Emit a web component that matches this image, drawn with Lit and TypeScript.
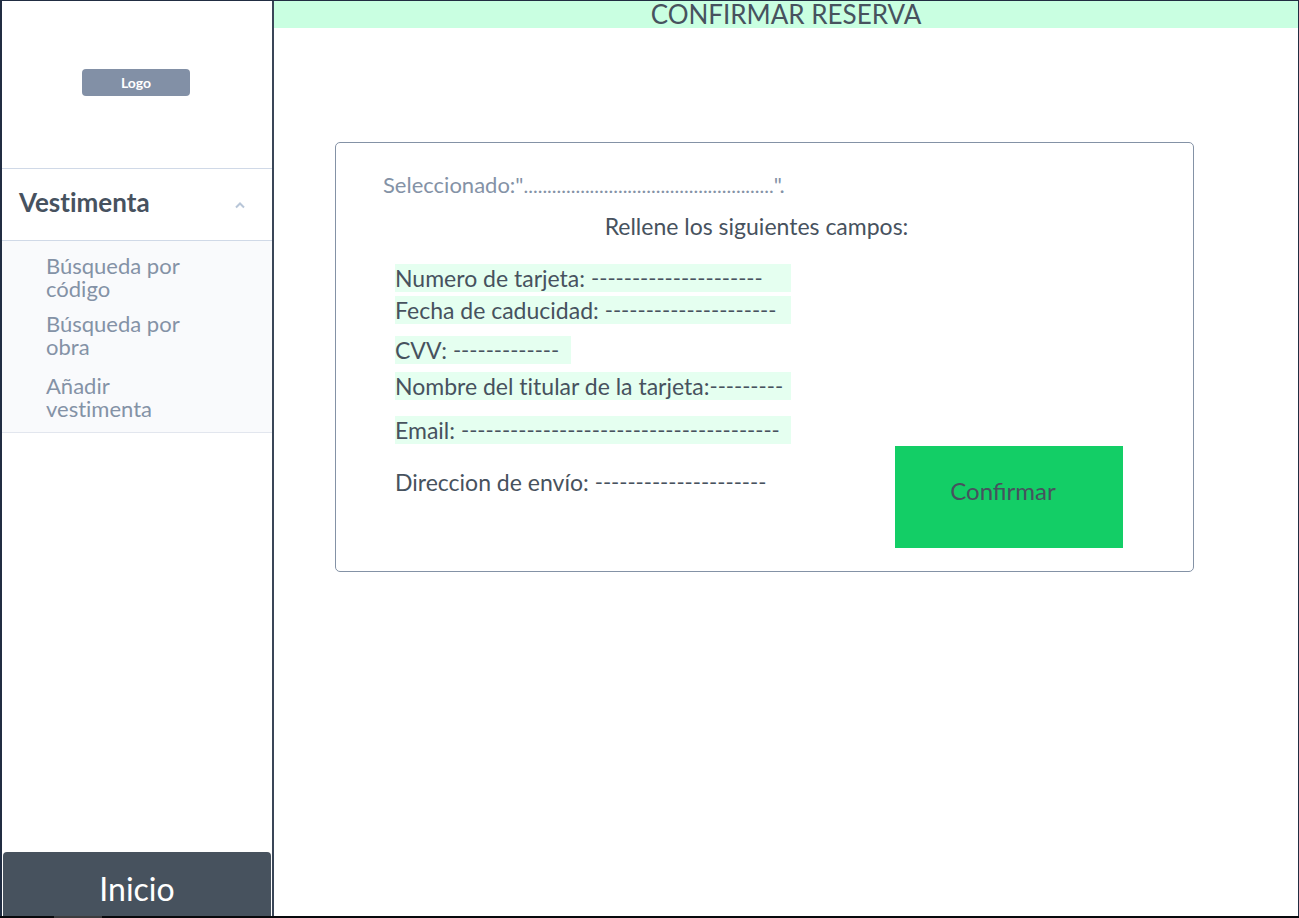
import { LitElement, html, css } from "lit";
import { customElement, state } from "lit/decorators.js";
import { classMap } from "lit/directives/class-map.js";

interface Field {
  id: string;
  label: string;
  dashes: number;
  classes: Record<string, boolean>;
}

const FIELDS: Field[] = [
  { id: "numero", label: "Numero de tarjeta:", dashes: 21, classes: {} },
  { id: "caducidad", label: "Fecha de caducidad:", dashes: 21, classes: { "gap-xs": true } },
  { id: "cvv", label: "CVV:", dashes: 13, classes: { "gap-m": true, short: true } },
  { id: "titular", label: "Nombre del titular de la tarjeta:", dashes: 9, classes: { "gap-s": true, tight: true } },
  { id: "email", label: "Email:", dashes: 39, classes: { "gap-l": true } },
  { id: "envio", label: "Direccion de envío:", dashes: 21, classes: { "gap-xl": true, plain: true } },
];

@customElement("app-sidebar")
export class AppSidebar extends LitElement {
  @state() private open = true;

  static styles = css`
    :host {
      display: flex;
      flex-direction: column;
      box-sizing: border-box;
      border-left: 2px solid #212d42;
      border-right: 2px solid #3a4658;
      background: #fff;
    }
    .brand {
      display: flex;
      justify-content: center;
      padding: 68px 0 72px;
      border-bottom: 1px solid #d0d9e7;
    }
    .logo {
      width: 108px;
      margin-right: 2px;
      border-radius: 4px;
      background: #8290a6;
      color: #fff;
      font-size: 14px;
      font-weight: 700;
      line-height: 27px;
      text-align: center;
    }
    .section {
      display: flex;
      align-items: center;
      justify-content: space-between;
      height: 72px;
      padding: 0 27px 6px 17px;
      border: 0;
      border-bottom: 1px solid #d0d9e7;
      background: none;
      color: #47525f;
      font: inherit;
      font-size: 26px;
      font-weight: 700;
      text-align: left;
    }
    .chevron {
      width: 10px;
      height: 8px;
      margin-top: 6px;
      fill: none;
      stroke: #b8c6d8;
      stroke-width: 2;
    }
    .links {
      display: flex;
      flex-direction: column;
      gap: 12px;
      margin: 0;
      padding: 13px 80px 12px 44px;
      border-bottom: 1px solid #e2e6ee;
      background: #f9fafc;
      list-style: none;
    }
    .apart {
      padding-top: 4px;
    }
    .links a {
      display: block;
      color: #8492a6;
      font-size: 22px;
      line-height: 23px;
      text-decoration: none;
    }
    .home {
      margin: auto 1px 0;
      padding: 13px 0 3px;
      border-radius: 4px 4px 0 0;
      background: #47525e;
      color: #fff;
      font-size: 32px;
      line-height: 48px;
      text-align: center;
      text-decoration: none;
    }
  `;

  render() {
    return html`
      <div class="brand"><div class="logo">Logo</div></div>
      <button class="section" aria-expanded=${this.open} @click=${() => (this.open = !this.open)}>
        Vestimenta
        <svg class="chevron" viewBox="0 0 10 8" aria-hidden="true"><path d="M1 6.5 5 2.5 9 6.5" /></svg>
      </button>
      ${this.open
        ? html`<ul class="links">
            <li><a href="#codigo">Búsqueda por código</a></li>
            <li><a href="#obra">Búsqueda por obra</a></li>
            <li class="apart"><a href="#nueva">Añadir vestimenta</a></li>
          </ul>`
        : null}
      <a class="home" href="#inicio">Inicio</a>
    `;
  }
}

@customElement("reservation-form")
export class ReservationForm extends LitElement {
  static styles = css`
    :host {
      display: block;
      border: 1px solid #8492a6;
      border-radius: 5px;
      color: #47525e;
      font-size: 23px;
      line-height: 28px;
    }
    .selected {
      margin: 0;
      padding: 28px 47px 0;
      color: #8492a6;
      font-size: 22px;
    }
    .dots {
      font-size: 20px;
    }
    .hint {
      margin: 0;
      padding: 13px 16px 0 0;
      text-align: center;
    }
    form {
      display: flex;
      align-items: flex-end;
      justify-content: space-between;
      padding: 24px 70px 23px 59px;
    }
    .fields {
      flex: 0 1 396px;
      padding-bottom: 52px;
    }
    .field {
      display: flex;
      gap: 6px;
      background: #e5fff0;
      white-space: nowrap;
    }
    .gap-xs { margin-top: 4px; }
    .gap-s { margin-top: 8px; }
    .gap-m { margin-top: 12px; }
    .gap-l { margin-top: 16px; }
    .gap-xl { margin-top: 24px; }
    .short { width: 176px; }
    .tight { gap: 0; }
    .plain { background: none; }
    input {
      flex: 1;
      min-width: 0;
      width: 0;
      height: 28px;
      padding: 0;
      border: 0;
      background: none;
      color: inherit;
      font: inherit;
      font-size: 22px;
    }
    button {
      flex: 0 0 228px;
      height: 102px;
      padding: 0 12px 12px 0;
      border: 0;
      background: #13ce66;
      color: #47525e;
      font: inherit;
      font-size: 24px;
      font-variant-ligatures: normal;
    }
  `;

  render() {
    return html`
      <p class="selected">Seleccionado:"<span class="dots">${".".repeat(53)}</span>".</p>
      <p class="hint">Rellene los siguientes campos:</p>
      <form @submit=${(e: Event) => e.preventDefault()}>
        <div class="fields">
          ${FIELDS.map(
            (f) => html`<div class=${classMap({ field: true, ...f.classes })}>
              <label for=${f.id}>${f.label}</label>
              <input id=${f.id} type="text" .value=${"-".repeat(f.dashes)} />
            </div>`
          )}
        </div>
        <button type="submit">Confirmar</button>
      </form>
    `;
  }
}

@customElement("app-root")
export class AppRoot extends LitElement {
  static styles = css`
    :host {
      display: grid;
      grid-template-columns: 274px 1fr;
      grid-template-rows: 1fr 2px;
      box-sizing: border-box;
      min-height: 100vh;
      border-top: 1px solid #212d42;
      background: #fff;
      font-family: Lato, sans-serif;
      font-variant-ligatures: none;
    }
    main {
      border-right: 1px solid #212d42;
    }
    h1 {
      margin: 0;
      background: #c9ffe1;
      color: #47525e;
      font-size: 26px;
      font-weight: 400;
      line-height: 27px;
      text-align: center;
    }
    .content {
      padding: 114px 104px 0 61px;
    }
    .taskbar {
      grid-column: 1 / -1;
      padding-left: 54px;
      background: #08090c;
    }
    .handle {
      width: 48px;
      height: 2px;
      background: #3c3c3e;
    }
  `;

  render() {
    return html`
      <app-sidebar></app-sidebar>
      <main>
        <h1>CONFIRMAR RESERVA</h1>
        <div class="content"><reservation-form></reservation-form></div>
      </main>
      <div class="taskbar"><div class="handle"></div></div>
    `;
  }
}
